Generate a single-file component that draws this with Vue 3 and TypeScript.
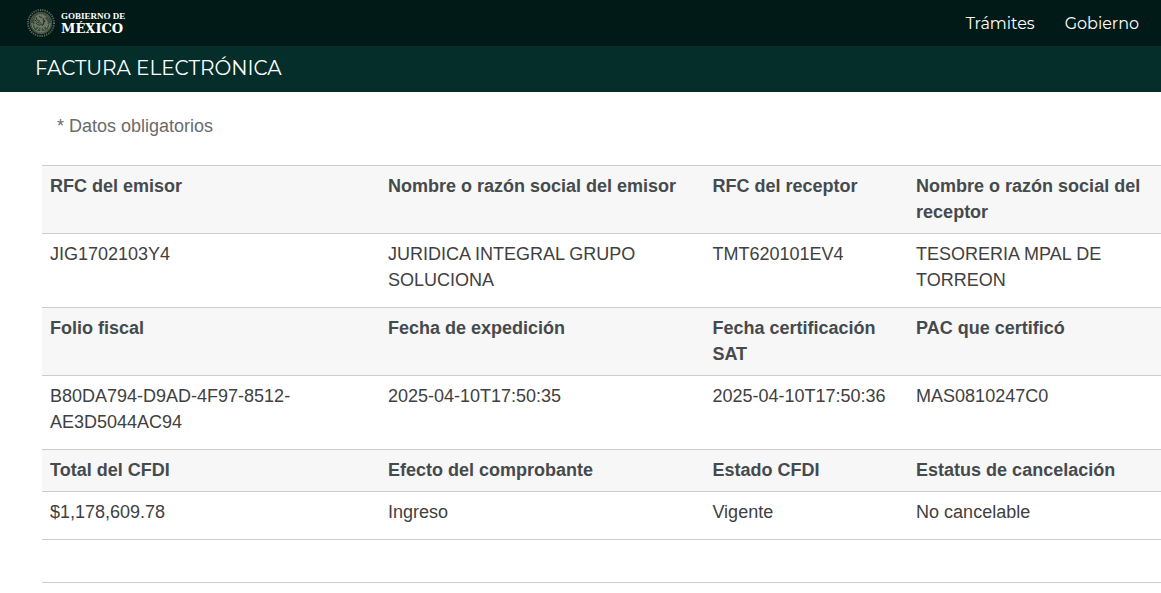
<script setup lang="ts">
interface Section {
  headings: string[]
  values: string[]
}

const links: string[] = ['Trámites', 'Gobierno']

const sections: Section[] = [
  {
    headings: ['RFC del emisor', 'Nombre o razón social del emisor', 'RFC del receptor', 'Nombre o razón social del receptor'],
    values: ['JIG1702103Y4', 'JURIDICA INTEGRAL GRUPO SOLUCIONA', 'TMT620101EV4', 'TESORERIA MPAL DE TORREON'],
  },
  {
    headings: ['Folio fiscal', 'Fecha de expedición', 'Fecha certificación SAT', 'PAC que certificó'],
    values: ['B80DA794-D9AD-4F97-8512-AE3D5044AC94', '2025-04-10T17:50:35', '2025-04-10T17:50:36', 'MAS0810247C0'],
  },
  {
    headings: ['Total del CFDI', 'Efecto del comprobante', 'Estado CFDI', 'Estatus de cancelación'],
    values: ['$1,178,609.78', 'Ingreso', 'Vigente', 'No cancelable'],
  },
]
</script>

<template>
  <header>
    <div class="topbar">
      <a class="brand" href="#" aria-label="Gobierno de México">
        <svg class="seal" viewBox="0 0 28 28" fill="none" aria-hidden="true">
          <circle cx="14" cy="14" r="13" stroke="#667060" stroke-width="1.8" stroke-dasharray="1.2 1.1" />
          <circle cx="14" cy="14" r="10.8" fill="#3c4b3f" stroke="#59644f" stroke-width="0.7" />
          <path d="M8 9c1-4 6-5 9-3l3 2-3 1c3 1 5 4 3 7-1 2-3 3-6 3l-4-1c-3-2-3-6-2-9z" fill="#6f7763" />
          <path d="M9 8c0 3 2 4 4 4M8 11c2 3 4 3 6 3M9 14c2 3 4 2 6 1M16 9c1 3 1 6-1 8M12 7l3 2M18 11l-2 5" stroke="#1d302a" stroke-width="1" />
          <path d="M5 14c0 6 4 9 9 9s9-3 9-9M7 15l2 4M21 15l-2 4M10 21l2-2M18 21l-2-2M14 23v-4" stroke="#7f8873" stroke-width="1" />
          <path d="M7 20c2 3 5 4 7 4s5-1 7-4M6 10l2-3M20 6l2 4" stroke="#52604f" stroke-width="0.9" />
        </svg>
        <span class="brand-text">
          <span class="brand-small">GOBIERNO DE</span>
          <span class="brand-large">MÉXICO</span>
        </span>
      </a>
      <nav>
        <a v-for="link in links" :key="link" href="#">{{ link }}</a>
      </nav>
    </div>
    <div class="titlebar">
      <h1>FACTURA ELECTRÓNICA</h1>
    </div>
  </header>
  <main>
    <p class="note">* Datos obligatorios</p>
    <table>
      <colgroup>
        <col class="col-a" />
        <col class="col-b" />
        <col class="col-c" />
        <col />
      </colgroup>
      <tbody v-for="section in sections" :key="section.headings[0]">
        <tr class="headings">
          <th v-for="heading in section.headings" :key="heading" scope="col">{{ heading }}</th>
        </tr>
        <tr>
          <td v-for="value in section.values" :key="value">{{ value }}</td>
        </tr>
      </tbody>
      <tfoot>
        <tr>
          <td class="blank" colspan="4"></td>
        </tr>
      </tfoot>
    </table>
  </main>
</template>

<style>
body {
  margin: 0;
  background: #fff;
}
</style>

<style scoped>
header {
  color: #fff;
  font-family: Montserrat, Inter, sans-serif;
}

.topbar {
  display: flex;
  align-items: center;
  justify-content: space-between;
  box-sizing: border-box;
  height: 46px;
  padding: 0 22px 0 27px;
  background: #021a17;
}

a {
  color: inherit;
  text-decoration: none;
}

.brand {
  display: flex;
  align-items: center;
  gap: 6px;
}

.seal {
  width: 28px;
  height: 28px;
}

.brand-text {
  display: flex;
  flex-direction: column;
  font-family: "DejaVu Serif", serif;
  font-weight: 700;
}

.brand-small {
  font-family: "Liberation Serif", serif;
  font-size: 9px;
  line-height: 10px;
}

.brand-large {
  font-size: 13px;
  line-height: 15px;
}

nav {
  display: flex;
  gap: 30px;
  font-size: 16px;
}

.titlebar {
  display: flex;
  align-items: center;
  box-sizing: border-box;
  height: 46px;
  padding: 0 35px 2px;
  background: #052d2a;
}

h1 {
  margin: 0;
  font-size: 20px;
  font-weight: 400;
  line-height: 26px;
}

main {
  padding: 21px 0 10px 42px;
  color: #404041;
  font-family: "Liberation Sans", Arial, sans-serif;
  font-size: 18px;
  line-height: 26px;
}

.note {
  margin: 0 0 26px;
  padding-left: 15px;
  color: #6a6a6b;
}

table {
  width: 100%;
  table-layout: fixed;
  border-collapse: separate;
  border-spacing: 0;
  border-bottom: 1px solid #ccc;
}

.col-a {
  width: 30.2%;
}

.col-b {
  width: 29%;
}

.col-c {
  width: 18.2%;
}

th,
td {
  padding: 7px 8px 14px;
  border-top: 1px solid #ccc;
  text-align: left;
  vertical-align: top;
}

th {
  padding-bottom: 8px;
  color: #454a4d;
  font-weight: 700;
}

.headings {
  background: #f7f7f7;
}

.blank {
  height: 42px;
  padding: 0;
}
</style>
